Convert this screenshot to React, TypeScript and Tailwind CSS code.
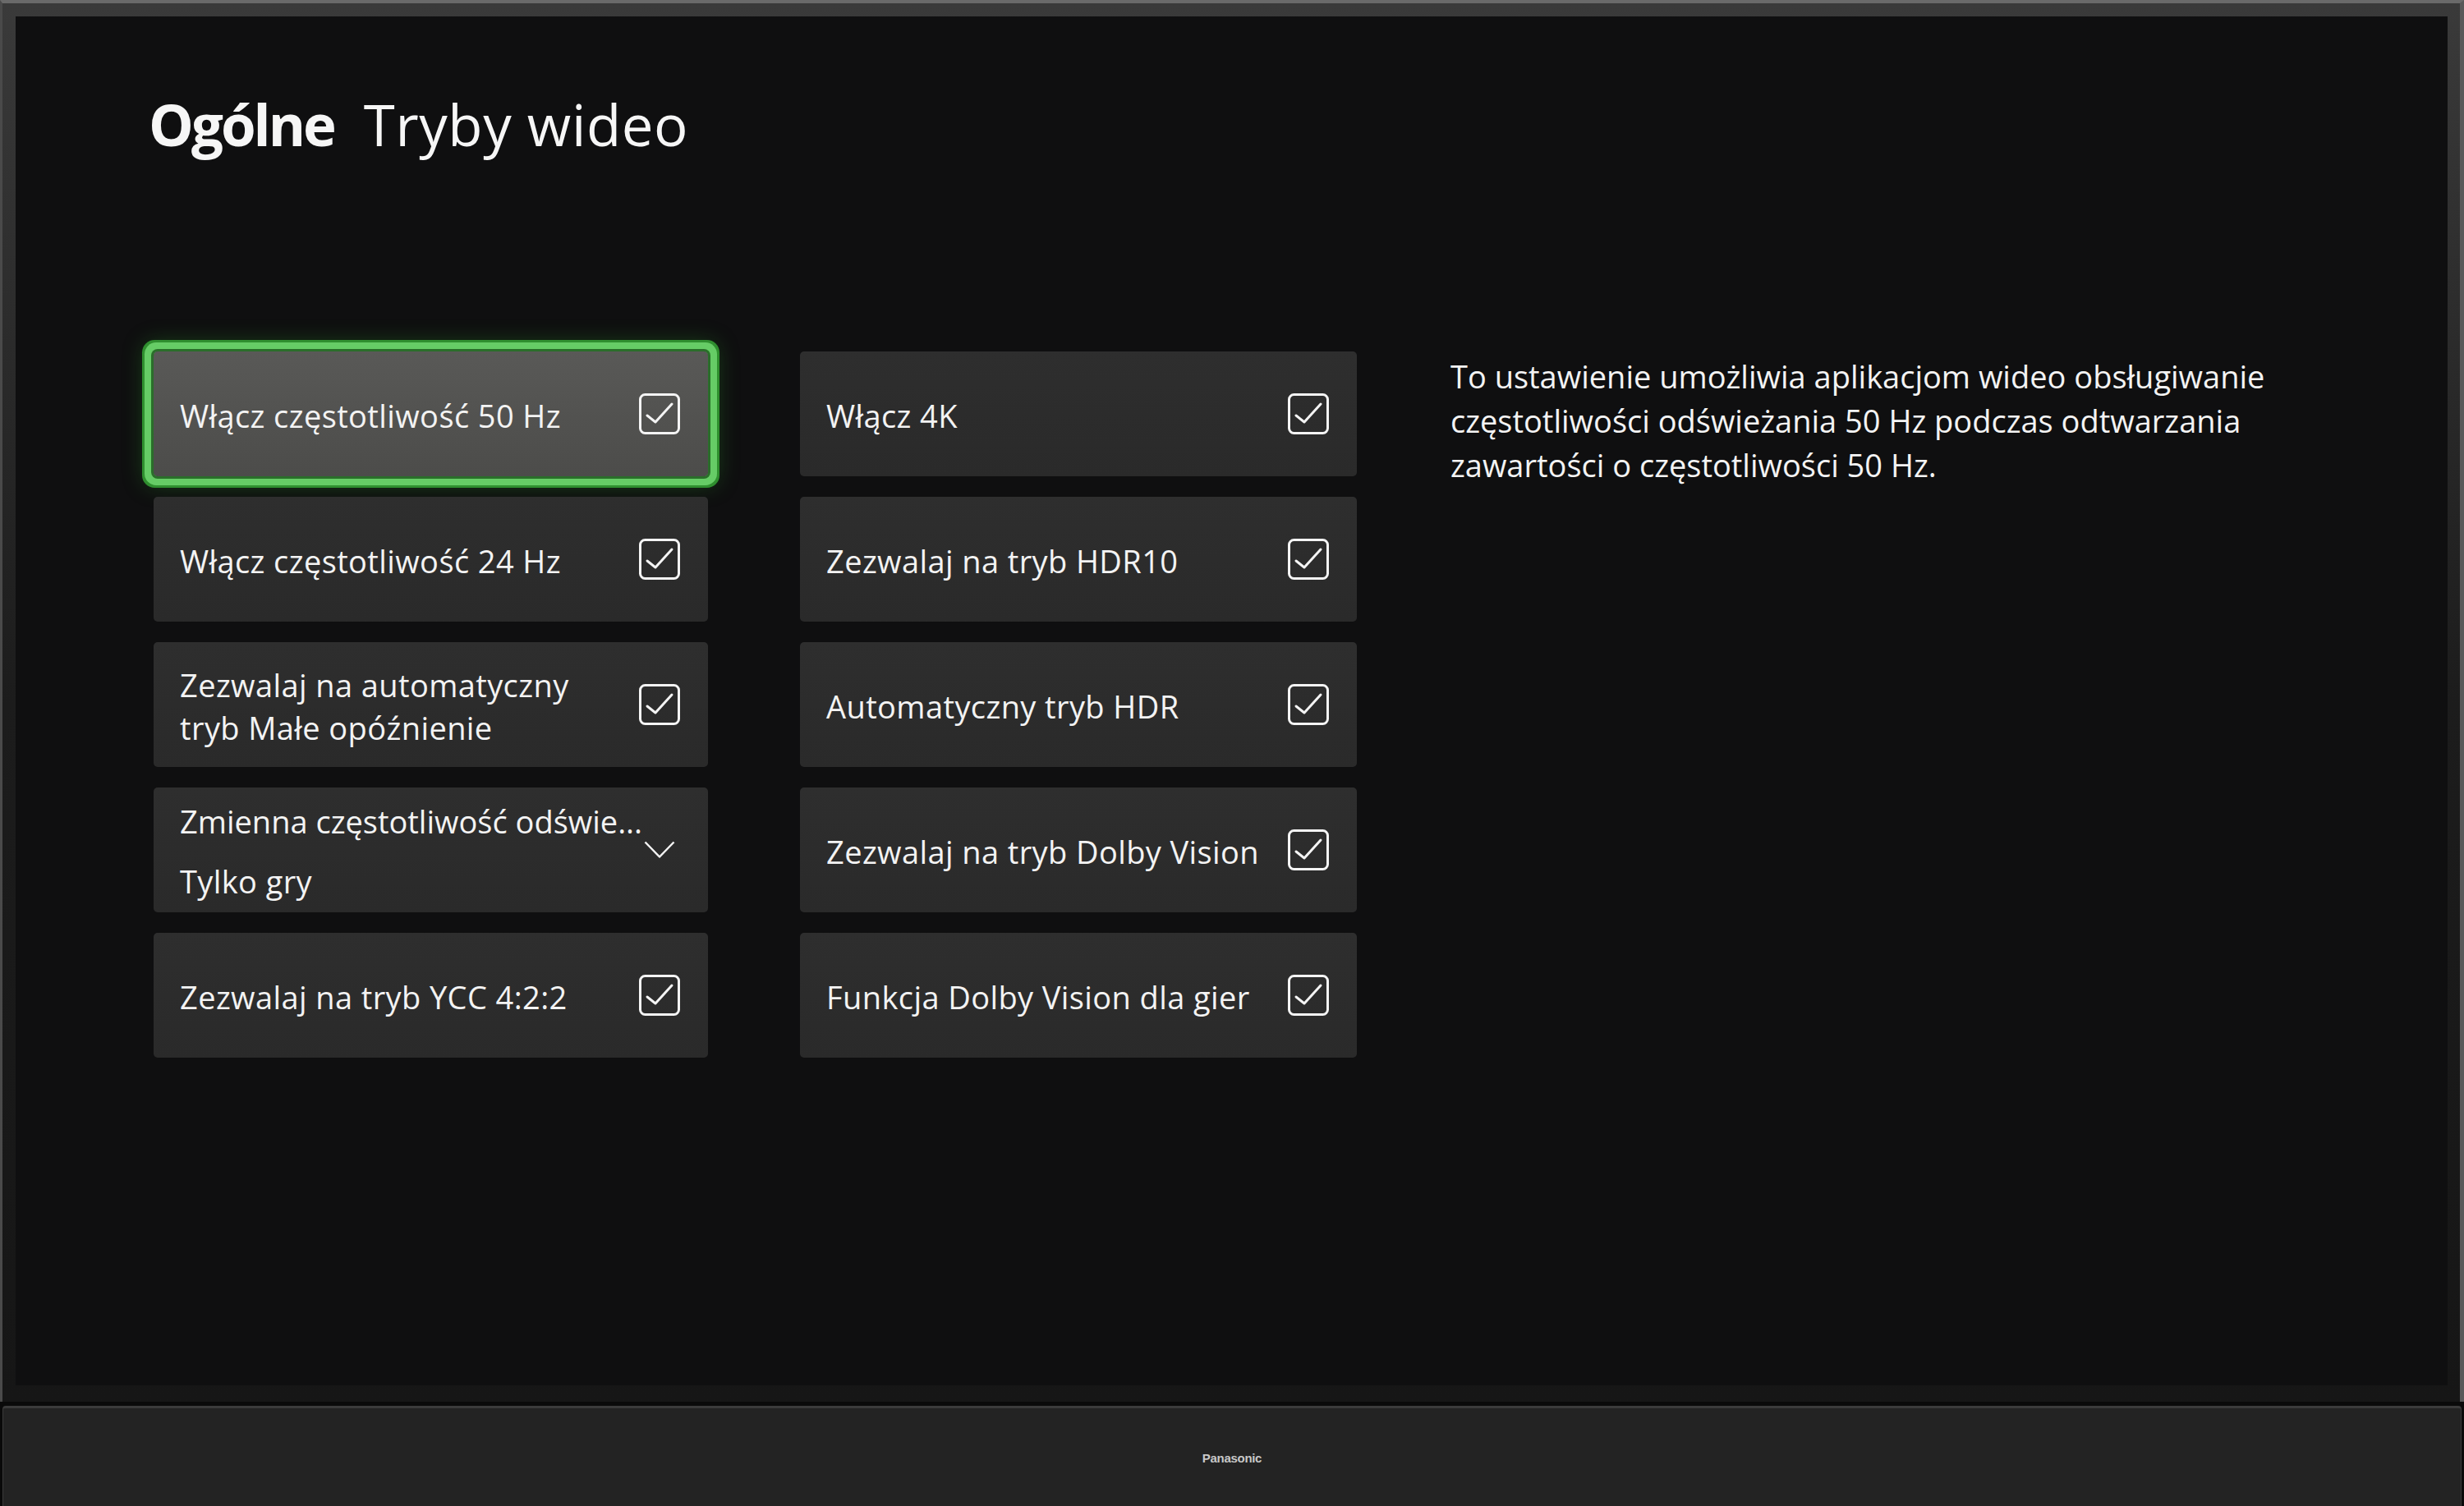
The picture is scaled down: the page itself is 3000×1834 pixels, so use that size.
import React from "react";

function CheckBox() {
  return (
    <svg width="50" height="50" viewBox="0 0 50 50" className="shrink-0">
      <rect x="1.5" y="1.5" width="47" height="47" rx="6" fill="none" stroke="#f4f4f4" strokeWidth="3" />
      <polyline points="10,27 20,35 40,13" fill="none" stroke="#f4f4f4" strokeWidth="3" strokeLinecap="round" strokeLinejoin="round" />
    </svg>
  );
}

function Chevron() {
  return (
    <svg width="38" height="22" viewBox="0 0 38 22" className="shrink-0">
      <polyline points="1.5,1.5 19,19.5 36.5,1.5" fill="none" stroke="#f4f4f4" strokeWidth="2.5" strokeLinejoin="round" />
    </svg>
  );
}

type CardProps = { children: React.ReactNode; focused?: boolean; chevron?: boolean };

function Card({ children, focused, chevron }: CardProps) {
  const base = "h-[152px] rounded-[5px] flex items-center justify-between pl-[32px] text-[#f3f3f3] text-[38px] leading-[52px] tracking-[0.4px]";
  const bg = focused
    ? "bg-gradient-to-b from-[#595957] to-[#4c4c4a] shadow-[0_0_0_3px_#2a6e2a,0_0_0_11px_#66cc66,0_0_0_14px_#2f8f2f,0_0_26px_12px_rgba(40,150,40,0.35)]"
    : "bg-gradient-to-b from-[#2e2e2e] to-[#2a2a2a]";
  return (
    <div className={`${base} ${bg} ${chevron ? "pr-[40px]" : "pr-[34px]"}`}>
      <div className="flex flex-col pt-[3px] whitespace-nowrap">{children}</div>
      {chevron ? <Chevron /> : <CheckBox />}
    </div>
  );
}

export default function App() {
  return (
    <div className="w-[3000px] h-[1834px] bg-[#0a0a0a] flex flex-col overflow-hidden font-['Open_Sans','Noto_Sans',sans-serif]">
      {/* TV panel */}
      <div className="h-[1707px] w-[3000px] bg-gradient-to-b from-[#3a3a3a] via-[#1c1c1c] to-[#161616] border-t-[4px] border-t-[#6a6a6a] border-l-[3px] border-l-[#4a4a4a] border-r-[5px] border-r-[#585858] pt-[16px] pl-[16px] pr-[15px] pb-[20px]">
        <div className="w-full h-full bg-[#0f0f10] pl-[168px] pt-[97px] flex flex-col">
          <h1 className="-ml-[6px] text-[69px] leading-[68px] text-[#f6f6f6] flex items-baseline gap-[36px]">
            <span className="font-bold tracking-[-3px]">Ogólne</span>
            <span className="font-normal tracking-[0.6px]">Tryby wideo</span>
          </h1>

          <div className="mt-[243px] flex items-start">
            <div className="grid grid-cols-[675px_678px] auto-rows-[152px] gap-x-[112px] gap-y-[25px]">
              <Card focused>
                <span>Włącz częstotliwość 50 Hz</span>
              </Card>
              <Card>
                <span>Włącz 4K</span>
              </Card>

              <Card>
                <span>Włącz częstotliwość 24 Hz</span>
              </Card>
              <Card>
                <span>Zezwalaj na tryb HDR10</span>
              </Card>

              <Card>
                <span>Zezwalaj na automatyczny</span>
                <span>tryb Małe opóźnienie</span>
              </Card>
              <Card>
                <span>Automatyczny tryb HDR</span>
              </Card>

              <Card chevron>
                <span className="tracking-[0px]">Zmienna częstotliwość odświe...</span>
                <span className="mt-[21px]">Tylko gry</span>
              </Card>
              <Card>
                <span>Zezwalaj na tryb Dolby Vision</span>
              </Card>

              <Card>
                <span>Zezwalaj na tryb YCC 4:2:2</span>
              </Card>
              <Card>
                <span>Funkcja Dolby Vision dla gier</span>
              </Card>
            </div>

            <div className="ml-[114px] pt-[3px] flex flex-col text-[38px] leading-[54px] tracking-[0px] text-[#f3f3f3] whitespace-nowrap">
              <span>To ustawienie umożliwia aplikacjom wideo obsługiwanie</span>
              <span>częstotliwości odświeżania 50 Hz podczas odtwarzania</span>
              <span>zawartości o częstotliwości 50 Hz.</span>
            </div>
          </div>
        </div>
      </div>

      {/* soundbar */}
      <div className="mt-[5px] mx-[3px] h-[122px] rounded-t-[4px] bg-[#232323] border-t-[3px] border-t-[#3b3b3b] border-l border-l-[#3a3a3a] border-r border-r-[#3a3a3a] flex items-center justify-center">
        <span className="text-[15px] font-bold text-[#c8c8c8] tracking-[-0.3px] font-['Liberation_Sans',sans-serif] mt-[4px]">Panasonic</span>
      </div>
    </div>
  );
}
